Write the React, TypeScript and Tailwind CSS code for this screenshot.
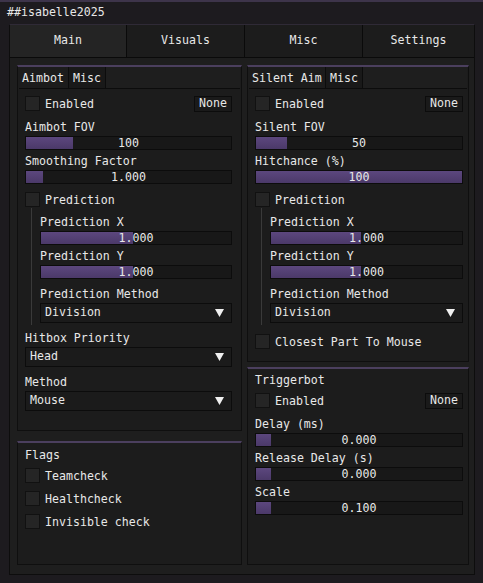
import React from 'react';

const Box: React.FC = () => (
  <div className="w-[15px] h-[15px] shrink-0 bg-[#252525] border border-[#111111]" />
);

const Check: React.FC<{ label: string; className?: string; bind?: boolean }> = ({ label, className = '', bind }) => (
  <div className={`flex items-start h-[16px] ${className}`}>
    <Box />
    <span className="ml-[5px] h-[16px] leading-[17px]">{label}</span>
    {bind && (
      <div className="ml-auto h-[16px] px-[4px] flex items-center bg-[#1a1a1a] border border-[#0c0c0c]">None</div>
    )}
  </div>
);

const Label: React.FC<{ text: string; className?: string }> = ({ text, className = '' }) => (
  <div className={`h-[14px] leading-[16px] ${className}`}>{text}</div>
);

const Slider: React.FC<{ fill: number; value: string; className?: string }> = ({ fill, value, className = '' }) => (
  <div className={`relative h-[14px] bg-[#181818] border border-[#0c0c0c] ${className}`}>
    <div className="h-full bg-gradient-to-b from-[#5c477e] to-[#4b3969]" style={{ width: fill }} />
    <span className="absolute inset-0 flex items-center justify-center leading-[12px]">{value}</span>
  </div>
);

const Combo: React.FC<{ value: string; className?: string }> = ({ value, className = '' }) => (
  <div className={`h-[20px] flex items-center justify-between pl-[4px] pr-[7px] bg-[#1b1b1b] border border-[#0c0c0c] ${className}`}>
    <span>{value}</span>
    <svg width="9" height="8" viewBox="0 0 9 8">
      <path d="M0 0 H9 L4.5 8 Z" fill="#f0f0f0" />
    </svg>
  </div>
);

const SubTabs: React.FC<{ first: string; w: string }> = ({ first, w }) => (
  <div className="flex h-[22px] mx-[1px] border-b border-[#0c0c0c] bg-[#1e1e1e]">
    <div className={`${w} pl-[3px] leading-[22px] bg-[#1c1c1c]`}>{first}</div>
    <div className="w-[38px] text-center leading-[22px] bg-[#191919] border-x border-[#0c0c0c]">Misc</div>
  </div>
);

const Prediction: React.FC<{ fill: number }> = ({ fill }) => (
  <>
    <Check label="Prediction" className="mt-[8px]" />
    <div className="ml-[6px] border-l border-[#3a3a3a] pl-[8px] pb-[2px]">
      <Label text="Prediction X" className="mt-[6px]" />
      <Slider fill={fill} value="1.000" className="mt-[3px]" />
      <Label text="Prediction Y" className="mt-[3px]" />
      <Slider fill={fill} value="1.000" className="mt-[3px]" />
      <Label text="Prediction Method" className="mt-[7px]" />
      <Combo value="Division" className="mt-[3px]" />
    </div>
  </>
);

const Group: React.FC<{ className: string; children: React.ReactNode }> = ({ className, children }) => (
  <div className={`flex flex-col bg-[#1c1c1c] border border-[#0f0f0f] border-t-2 border-t-[#4b3f5e] ${className}`}>
    {children}
  </div>
);

const tabs = [
  { name: 'Main', w: 'w-[116px]', active: true },
  { name: 'Visuals', w: 'w-[118px]', active: false },
  { name: 'Misc', w: 'w-[118px]', active: false },
  { name: 'Settings', w: 'flex-1', active: false },
];

export default function App() {
  return (
    <div
      className="w-[483px] h-[583px] flex flex-col bg-[#1d1b1f] border-t-2 border-[#3d344a] text-[#e8e8e8] text-[11.6px] overflow-hidden"
      style={{ fontFamily: '"DejaVu Sans Mono", "Liberation Mono", monospace' }}
    >
      <div className="h-[22px] px-[7px] flex items-center">##isabelle2025</div>

      <div className="flex-1 ml-[9px] mr-[8px] mb-[8px] flex flex-col bg-[#1e1e1e] border border-[#0d0d0d] border-t-[#2f2a36]">
        <div className="flex h-[33px] border-b border-[#0a0a0a]">
          {tabs.map((t) => (
            <div
              key={t.name}
              className={`${t.w} flex items-center justify-center ${
                t.active ? 'bg-[#242424]' : 'bg-[#1c1c1c] border-l border-[#0a0a0a]'
              }`}
            >
              {t.name}
            </div>
          ))}
        </div>

        <div className="flex flex-1 pl-[7px] pr-[4px] pt-[7px] pb-[9px] gap-[5px]">
          <div className="w-[225px] flex flex-col gap-[10px]">
            <Group className="h-[366px] pl-[7px] pr-[9px]">
              <div className="-ml-[7px] -mr-[9px]">
                <SubTabs first="Aimbot" w="w-[49px]" />
              </div>
              <Check label="Enabled" bind className="mt-[7px]" />
              <Label text="Aimbot FOV" className="mt-[7px]" />
              <Slider fill={47} value="100" className="mt-[3px]" />
              <Label text="Smoothing Factor" className="mt-[3px]" />
              <Slider fill={17} value="1.000" className="mt-[3px]" />
              <Prediction fill={92} />
              <Label text="Hitbox Priority" className="mt-[5px]" />
              <Combo value="Head" className="mt-[3px]" />
              <Label text="Method" className="mt-[7px]" />
              <Combo value="Mouse" className="mt-[3px]" />
            </Group>

            <Group className="flex-1 pl-[7px] pr-[9px]">
              <Label text="Flags" className="mt-[4px]" />
              <Check label="Teamcheck" className="mt-[7px]" />
              <Check label="Healthcheck" className="mt-[7px]" />
              <Check label="Invisible check" className="mt-[7px]" />
            </Group>
          </div>

          <div className="w-[222px] flex flex-col gap-[5px]">
            <Group className="h-[297px] pl-[7px] pr-[5px]">
              <div className="-ml-[7px] -mr-[5px]">
                <SubTabs first="Silent Aim" w="w-[76px]" />
              </div>
              <Check label="Enabled" bind className="mt-[7px]" />
              <Label text="Silent FOV" className="mt-[7px]" />
              <Slider fill={31} value="50" className="mt-[3px]" />
              <Label text="Hitchance (%)" className="mt-[3px]" />
              <Slider fill={206} value="100" className="mt-[3px]" />
              <Prediction fill={90} />
              <Check label="Closest Part To Mouse" className="mt-[9px]" />
            </Group>

            <Group className="flex-1 pl-[7px] pr-[5px]">
              <Label text="Triggerbot" className="mt-[3px]" />
              <Check label="Enabled" bind className="mt-[7px]" />
              <Label text="Delay (ms)" className="mt-[7px]" />
              <Slider fill={15} value="0.000" className="mt-[3px]" />
              <Label text="Release Delay (s)" className="mt-[3px]" />
              <Slider fill={15} value="0.000" className="mt-[3px]" />
              <Label text="Scale" className="mt-[3px]" />
              <Slider fill={15} value="0.100" className="mt-[3px]" />
            </Group>
          </div>
        </div>
      </div>
    </div>
  );
}
